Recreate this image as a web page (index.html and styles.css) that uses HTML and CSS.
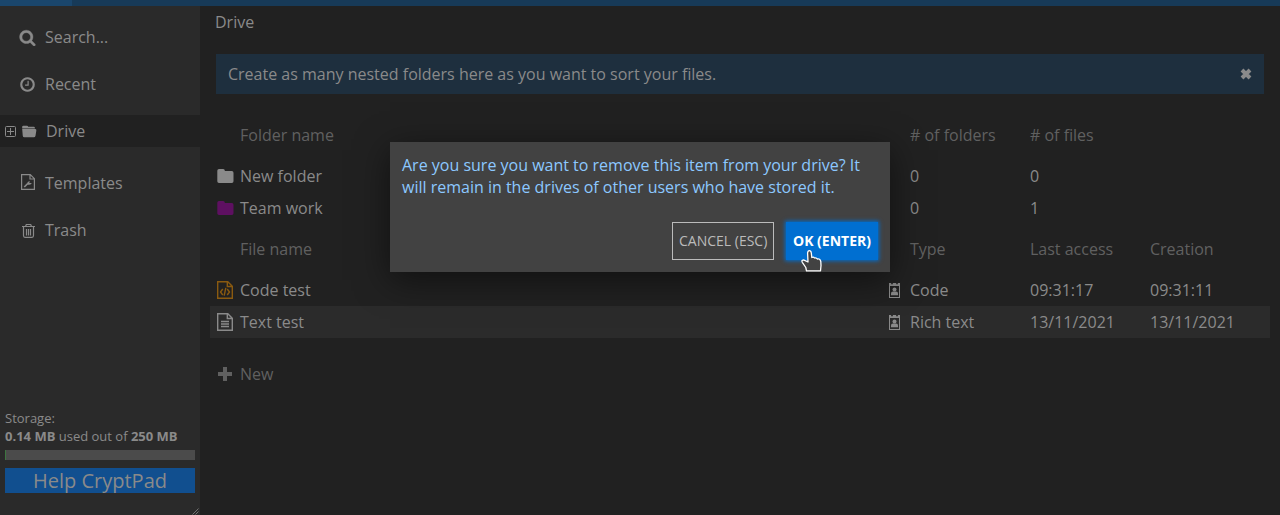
FILE: index.html
```html
<!DOCTYPE html>
<html lang="en">
<head>
<meta charset="utf-8">
<title>Drive</title>
<link rel="stylesheet" href="styles.css">
</head>
<body>
<svg class="defs" width="0" height="0">
  <symbol id="folder" viewBox="0 0 17 14"><path d="M2 0h4.200a1.600 1.600 0 0 1 1.600 1.600v.4H14.800A1.700 1.700 0 0 1 16.500 3.700V12.300A1.700 1.700 0 0 1 14.800 14H2A1.700 1.700 0 0 1 .3 12.300V1.700A1.700 1.700 0 0 1 2 0Z" fill="currentColor"/></symbol>
  <symbol id="badge" viewBox="0 0 11 15"><path d="M0 0H11V15H0ZM1 3v11h9V3Z" fill="currentColor" fill-rule="evenodd"/><path d="M2.200 0V1.300H3.800V0ZM7.200 0V1.300H8.800V0Z" fill="#212121"/><circle cx="5.500" cy="6.500" r="2" fill="currentColor"/><path d="M2 12.200V10.300q0-1.900 2-1.900h3q2 0 2 1.900v1.900Z" fill="currentColor"/></symbol>
</svg>
<div class="topbar"><div class="topbar-start"></div></div>
<div class="app">
  <aside class="sidebar">
    <nav class="tree">
      <div class="item"><svg class="fa" viewBox="0 0 1792 1792"><path d="M1216 832q0-185-131.500-316.500t-316.500-131.500-316.500 131.500-131.500 316.500 131.500 316.500 316.500 131.500 316.500-131.500 131.500-316.500zm512 832q0 52-38 90t-90 38q-54 0-90-38l-343-342q-179 124-399 124-143 0-273.500-55.500t-225-150-150-225-55.500-273.500 55.500-273.500 150-225 225-150 273.500-55.500 273.500 55.500 225 150 150 225 55.500 273.500q0 220-124 399l343 343q37 37 37 90z" fill="currentColor" stroke="currentColor" stroke-width="40"/></svg><span>Search...</span></div>
      <div class="item"><svg class="fa" viewBox="0 0 1792 1792"><path d="M1024 544v448q0 14-9 23t-23 9h-320q-14 0-23-9t-9-23v-64q0-14 9-23t23-9h224v-352q0-14 9-23t23-9h64q14 0 23 9t9 23zm416 352q0-148-73-273t-198-198-273-73-273 73-198 198-73 273 73 273 198 198 273 73 273-73 198-198 73-273zm224 0q0 209-103 385.500t-279.500 279.500-385.500 103-385.500-103-279.500-279.500-103-385.500 103-385.500 279.500-279.500 385.500-103 385.500 103 279.500 279.500 103 385.500z" fill="currentColor"/></svg><span>Recent</span></div>
      <div class="item active"><svg class="expand" viewBox="0 0 11 11"><rect x=".5" y=".5" width="10" height="10" rx="1" fill="none" stroke="currentColor"/><path d="M2 5.500h7M5.500 2v7" stroke="currentColor"/></svg><svg class="open" viewBox="0 0 16 13"><path d="M.2 3.200V1.500Q.2.300 1.500.300H5.300Q6.500.300 6.500 1.500H12.500Q13.800 1.500 13.800 3V3.200Z" fill="currentColor"/><path d="M.2 3.700H14.200Q15.600 3.700 15.300 5.300L14.400 11Q14.100 12.600 12.700 12.600H2.500Q1 12.600.8 11Z" fill="currentColor"/></svg><span>Drive</span></div>
      <div class="item spaced"><svg class="doc" viewBox="0 0 14 16"><path d="M.6.600H9.300L13.400 4.700V15.400H.6ZM9 .6V5H13.400" fill="none" stroke="currentColor" stroke-width="1.200"/><path d="M3.300 13 6.800 9.500" stroke="currentColor" stroke-width="1.700"/><path d="M6.300 10.500Q5.600 7.500 9 7.200L8.200 8.900 10.800 9Q10 11.500 6.300 10.500Z" fill="currentColor"/></svg><span>Templates</span></div>
      <div class="item"><svg class="trash" viewBox="0 0 13 15"><path d="M0 3.500H13M3.500 3.500 4.300 1.500H8.700L9.500 3.500M1.500 3.500V12.500Q1.500 14.300 3 14.300H10Q11.500 14.300 11.500 12.500V3.500M4.500 6V12.500M6.500 6V12.500M8.500 6V12.500" fill="none" stroke="currentColor" stroke-width="1.200"/></svg><span>Trash</span></div>
    </nav>
    <div class="storage">
      <div class="usage">Storage:<br><b>0.14 MB</b> used out of <b>250 MB</b></div>
      <div class="meter"><div class="meter-used"></div></div>
      <div class="help">Help CryptPad</div>
    </div>
    <svg class="grip" viewBox="0 0 7 7"><path d="M.5 6.500 6.500.5M3.500 6.500 6.500 3.500" stroke="#858585" stroke-width=".8"/></svg>
  </aside>
  <main class="content">
    <div class="path">Drive</div>
    <div class="info"><span>Create as many nested folders here as you want to sort your files.</span><svg class="close" viewBox="0 0 12 12"><path d="M2 2 10 10M10 2 2 10" stroke="currentColor" stroke-width="3.900"/></svg></div>
    <div class="list">
      <div class="row head folders"><span></span><span>Folder name</span><span></span><span># of folders</span><span># of files</span><span></span></div>
      <div class="row"><svg class="folder"><use href="#folder"/></svg><span>New folder</span><span></span><span>0</span><span>0</span><span></span></div>
      <div class="row"><svg class="folder team"><use href="#folder"/></svg><span>Team work</span><span></span><span>0</span><span>1</span><span></span></div>
      <div class="row head"><span></span><span>File name</span><span></span><span>Type</span><span>Last access</span><span>Creation</span></div>
      <div class="row"><svg class="file code" viewBox="0 0 16 18"><path d="M.7.700H10.800L15.300 5.200V17.300H.7ZM10.300.700V5.500H15.300" fill="none" stroke="currentColor" stroke-width="1.400"/><path d="M5.800 8 3.500 11 5.800 14M10.200 8 12.500 11 10.200 14M8.800 6.800 7.200 14.700" fill="none" stroke="currentColor" stroke-width="1.400"/></svg><span>Code test</span><svg class="badge"><use href="#badge"/></svg><span>Code</span><span>09:31:17</span><span>09:31:11</span></div>
      <div class="row selected"><svg class="file" viewBox="0 0 16 18"><path d="M.7.700H10.800L15.300 5.200V17.300H.7ZM10.300.700V5.500H15.300" fill="none" stroke="currentColor" stroke-width="1.400"/><path d="M4 8.500H12M4 11H12M4 13.500H12" stroke="currentColor" stroke-width="1.300"/></svg><span>Text test</span><svg class="badge"><use href="#badge"/></svg><span>Rich text</span><span>13/11/2021</span><span>13/11/2021</span></div>
      <div class="row new"><svg class="plus" viewBox="0 0 14 14"><path d="M0 7H14M7 0V14" stroke="currentColor" stroke-width="4"/></svg><span>New</span></div>
    </div>
  </main>
</div>
<div class="dialog">
  <p class="message">Are you sure you want to remove this item from your drive? It will remain in the drives of other users who have stored it.</p>
  <div class="actions"><button class="cancel">CANCEL (ESC)</button><button class="ok">OK (ENTER)</button></div>
  <svg class="pointer" viewBox="0 0 21 22"><path d="M5.500 20.800 4.800 17.500 1.300 12.300Q.2 10.200 2.500 9.800L7 12 6.600 3Q6.800.7 8.400.7T10.300 3L10.800 7.500Q12.500 6.500 13.500 8 15.400 7.300 16.300 9 19 8.300 19.800 11.500L20 15.500 19.500 20.800Z" fill="#424242" stroke="#fff" stroke-width="1.300" stroke-linejoin="round"/></svg>
</div>
</body>
</html>
```

FILE: styles.css
```css
* { box-sizing: border-box; }
body {
  margin: 0;
  height: 515px;
  overflow: hidden;
  display: flex;
  flex-direction: column;
  background: #212121;
  color: #8a8a8a;
  font: 16px/32px "Open Sans", sans-serif;
}
svg { display: block; flex: none; }
.defs { position: absolute; }
.topbar { flex: none; height: 6px; background: #173a58; }
.topbar-start { width: 72px; height: 6px; background: #1a466c; }
.app { flex: 1; display: flex; }
.sidebar {
  position: relative;
  width: 200px;
  display: flex;
  flex-direction: column;
  justify-content: space-between;
  background: #2a2a2a;
}
.tree { display: flex; flex-direction: column; gap: 15px; padding-top: 15px; }
.item { display: flex; align-items: center; height: 32px; padding-left: 20px; }
.item.active { padding-left: 5px; background: #212121; }
.item.spaced { margin-top: 5px; }
.fa { width: 17px; height: 17px; margin: 0 9px 0 -1px; }
.expand { width: 11px; height: 11px; margin-right: 6px; }
.open { width: 15px; height: 13px; margin-right: 9px; }
.doc { width: 14px; height: 16px; margin: 0 10px 2px 1px; }
.trash { width: 13px; height: 15px; margin: 0 10px 0 2px; }
.storage { padding: 0 5px 22px; }
.usage { font-size: 13px; line-height: 18px; }
.meter { height: 10px; margin: 5px 0 8px; background: #4b4b4b; }
.meter-used { width: 1px; height: 10px; background: #3d7540; }
.help {
  height: 25px;
  background: #114f8f;
  font-size: 20px;
  line-height: 25px;
  text-align: center;
}
.grip { position: absolute; right: 1px; bottom: 0; width: 7px; height: 7px; }
.content { flex: 1; padding: 0 10px; }
.path { height: 32px; padding-left: 5px; }
.info {
  display: flex;
  align-items: center;
  justify-content: space-between;
  height: 40px;
  margin: 16px 6px 25px;
  padding: 0 12px;
  background: #1e2f3e;
}
.close { width: 12px; height: 12px; }
.row {
  display: grid;
  grid-template-columns: 30px 1fr 22px 120px 120px 120px;
  align-items: center;
  height: 32px;
}
.row.head { height: 50px; color: #606060; }
.row.head.folders { height: 41px; padding-bottom: 9px; }
.row.selected { background: #2b2b2b; }
.row.new { margin-top: 20px; color: #606060; }
.folder { width: 17px; height: 14px; margin-left: 7px; }
.team { color: #5e1061; }
.file { width: 16px; height: 18px; margin-left: 7px; }
.code { color: #8a5a10; }
.badge { width: 11px; height: 15px; margin-left: 1px; }
.plus { width: 14px; height: 14px; margin-left: 8px; }
.dialog {
  position: absolute;
  left: 390px;
  top: 142px;
  width: 500px;
  height: 130px;
  padding: 12px;
  background: #424242;
  box-shadow: 0 8px 32px rgba(0, 0, 0, .5);
}
.message { margin: 0; color: #8cc8ff; line-height: 22px; }
.actions { display: flex; justify-content: flex-end; gap: 12px; margin-top: 24px; }
button { height: 38px; padding: 0 6px; font: 14px/20px "Open Sans", sans-serif; white-space: nowrap; }
.cancel { width: 102px; border: 1px solid #bbb; background: transparent; color: #bbb; }
.ok {
  width: 92px;
  border: 0;
  background: #006fd1;
  color: #fff;
  font-weight: 700;
  box-shadow: 0 0 4px 1px #006fd1;
}
.pointer { position: absolute; left: 411px; top: 108px; width: 21px; height: 22px; }
```
